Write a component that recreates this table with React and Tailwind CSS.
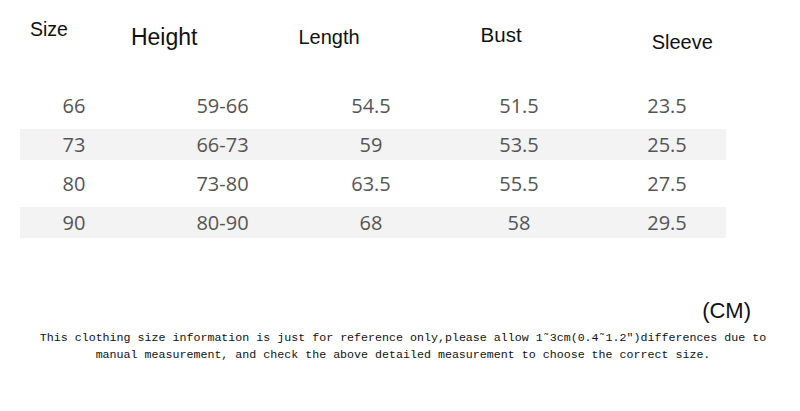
import React from "react";

const rows = [
  ["66", "59-66", "54.5", "51.5", "23.5"],
  ["73", "66-73", "59", "53.5", "25.5"],
  ["80", "73-80", "63.5", "55.5", "27.5"],
  ["90", "80-90", "68", "58", "29.5"],
];

export default function App() {
  return (
    <div className="w-[800px] h-[411px] bg-white overflow-hidden">
      {/* Header labels */}
      <div className="flex h-[55px] items-start text-[#111] font-['Liberation_Sans',Arial,sans-serif] leading-none">
        <div className="ml-[30px] mt-[20px] text-[19.5px]">Size</div>
        <div className="ml-[63px] mt-[26px] text-[23px]">Height</div>
        <div className="ml-[101px] mt-[27px] text-[20px]">Length</div>
        <div className="ml-[121px] mt-[25px] text-[20.5px]">Bust</div>
        <div className="ml-[130px] mt-[32px] text-[20px]">Sleeve</div>
      </div>

      {/* Table */}
      <div className="mt-[35px] ml-[20px] w-[706px] flex flex-col gap-[8px] text-[#555] font-['Open_Sans','Noto_Sans',sans-serif] text-[20px]">
        {rows.map((row, idx) => (
          <div
            key={idx}
            className={
              idx % 2 === 1
                ? "grid grid-cols-[128px_149px_148px_148px_133px] h-[31px] items-center bg-[#f3f3f3]"
                : "grid grid-cols-[128px_149px_148px_148px_133px] h-[31px] items-center"
            }
          >
            <div className="text-center pr-[20px]">{row[0]}</div>
            <div className="text-center">{row[1]}</div>
            <div className="text-center">{row[2]}</div>
            <div className="text-center">{row[3]}</div>
            <div className="text-center pl-[15px]">{row[4]}</div>
          </div>
        ))}
      </div>

      {/* Unit */}
      <div className="mt-[62px] flex justify-end pr-[49px]">
        <span className="text-[22px] leading-none text-[#111] font-['Liberation_Sans',Arial,sans-serif]">
          (CM)
        </span>
      </div>

      {/* Note */}
      <div className="mt-[7px] pl-[6px] text-center whitespace-nowrap text-[11.65px] leading-[17px] text-[#111] font-['Liberation_Mono','DejaVu_Sans_Mono',monospace]">
        This clothing size information is just for reference only,please allow 1˜3cm(0.4˜1.2″)differences due to
        <br />
        manual measurement, and check the above detailed measurement to choose the correct size.
      </div>
    </div>
  );
}
